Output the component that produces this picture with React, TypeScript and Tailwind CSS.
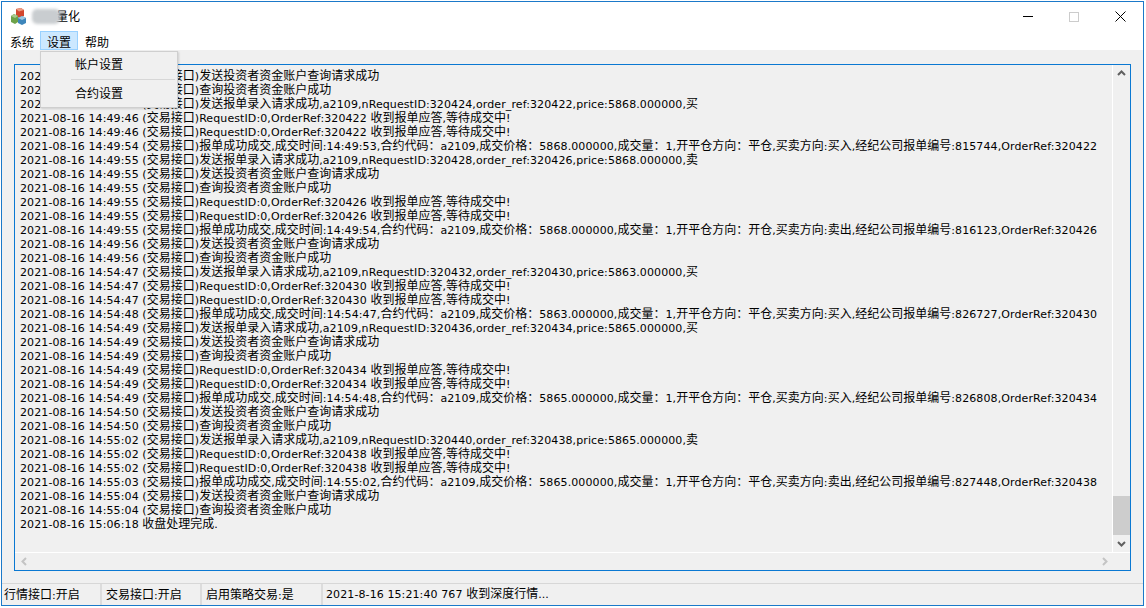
const account = '发送投资者资金账户查询请求成功';
const query = '查询投资者资金账户成功';

function order(id: number, ref: number, price: number, side: string) {
  return `发送报单录入请求成功,a2109,nRequestID:${id},order_ref:${ref},price:${price}.000000,${side}`;
}

function ack(ref: number) {
  return `RequestID:0,OrderRef:${ref} 收到报单应答,等待成交中!`;
}

function trade(time: string, price: number, open: string, side: string, no: number, ref: number) {
  return `报单成功成交,成交时间:${time},合约代码：a2109,成交价格：${price}.000000,成交量：1,开平仓方向：${open},买卖方向:${side},经纪公司报单编号:${no},OrderRef:${ref}`;
}

const logs: [string, string][] = [
  ['14:49:46', account],
  ['14:49:46', query],
  ['14:49:46', order(320424, 320422, 5868, '买')],
  ['14:49:46', ack(320422)],
  ['14:49:46', ack(320422)],
  ['14:49:54', trade('14:49:53', 5868, '平仓', '买入', 815744, 320422)],
  ['14:49:55', order(320428, 320426, 5868, '卖')],
  ['14:49:55', account],
  ['14:49:55', query],
  ['14:49:55', ack(320426)],
  ['14:49:55', ack(320426)],
  ['14:49:55', trade('14:49:54', 5868, '开仓', '卖出', 816123, 320426)],
  ['14:49:56', account],
  ['14:49:56', query],
  ['14:54:47', order(320432, 320430, 5863, '买')],
  ['14:54:47', ack(320430)],
  ['14:54:47', ack(320430)],
  ['14:54:48', trade('14:54:47', 5863, '平仓', '买入', 826727, 320430)],
  ['14:54:49', order(320436, 320434, 5865, '买')],
  ['14:54:49', account],
  ['14:54:49', query],
  ['14:54:49', ack(320434)],
  ['14:54:49', ack(320434)],
  ['14:54:49', trade('14:54:48', 5865, '平仓', '买入', 826808, 320434)],
  ['14:54:50', account],
  ['14:54:50', query],
  ['14:55:02', order(320440, 320438, 5865, '卖')],
  ['14:55:02', ack(320438)],
  ['14:55:02', ack(320438)],
  ['14:55:03', trade('14:55:02', 5865, '平仓', '卖出', 827448, 320438)],
  ['14:55:04', account],
  ['14:55:04', query],
];

// latin runs stay at 11px, CJK runs are 12px wide like the original font
function Mixed({ text }: { text: string }) {
  const parts = text.split(/([\u3000-\u9fff\uff00-\uffef]+)/);
  return (
    <>
      {parts.map((part, i) =>
        i % 2 === 1 ? (
          <span key={i} className="text-[12px]">
            {part}
          </span>
        ) : (
          <span key={i} className="tracking-[0.1px]">
            {part}
          </span>
        ),
      )}
    </>
  );
}

function AppIcon() {
  return (
    <svg width="17" height="17" viewBox="0 0 17 17">
      <path d="M6 1l5-1 3 2v6l-5 2-3-2z" fill="#d2472f" />
      <path d="M6 1l5-1 3 2-5 1.5z" fill="#ec9c83" />
      <path d="M1 8l3-2 4 2v6l-3 2-4-2z" fill="#6da24a" />
      <path d="M1 8l3-2 4 2-3 2z" fill="#a9c98f" />
      <path d="M8 10l4-2 4 2v5l-4 2-4-2z" fill="#3d86bb" />
      <path d="M8 10l4-2 4 2-4 2z" fill="#9cc8e2" />
    </svg>
  );
}

function WindowButtons() {
  return (
    <div className="flex items-center">
      <div className="w-[46px] h-[29px] flex items-center justify-center">
        <div className="w-[10px] h-px bg-black" />
      </div>
      <div className="w-[46px] h-[29px] flex items-center justify-center">
        <div className="w-[10px] h-[10px] border border-[#cccccc]" />
      </div>
      <div className="w-[46px] h-[29px] flex items-center justify-center">
        <svg width="11" height="11" viewBox="0 0 11 11" stroke="#000" fill="none">
          <path d="M0.5 0.5l10 10M10.5 0.5l-10 10" />
        </svg>
      </div>
    </div>
  );
}

function Chevron({ d, color }: { d: string; color: string }) {
  return (
    <svg width="9" height="9" viewBox="0 0 9 9" fill="none" stroke={color} strokeWidth="2">
      <path d={d} />
    </svg>
  );
}

export default function App() {
  return (
    <div className="w-[1146px] h-[608px] bg-white overflow-hidden pl-px pt-px text-black font-['DejaVu_Sans','Noto_Sans_CJK_SC',sans-serif] text-[11px]">
      <div className="relative w-[1143px] h-[605px] border border-[#1b79c9] bg-[#f0f0f0] flex flex-col">
        <div className="h-[29px] bg-white flex items-center justify-between pl-[8px]">
          <div className="flex items-center">
            <AppIcon />
            <div className="ml-[5px] w-[28px] h-[15px] rounded-[5px] bg-[#c9cdd0] blur-[1.5px]" />
            <div className="-ml-[4px] text-[12px]">量化</div>
          </div>
          <WindowButtons />
        </div>

        <div className="h-[19px] bg-white flex items-center pl-[2px] text-[12px]">
          <div className="px-[6px] h-[19px] leading-[24px]">系统</div>
          <div className="px-[6px] h-[19px] leading-[22px] bg-[#cce8ff] border border-[#99d1ff]">设置</div>
          <div className="px-[7px] h-[19px] leading-[24px]">帮助</div>
        </div>

        <div className="flex-1 px-[12px] pt-[14px] pb-[12px] min-h-0">
          <div className="h-full border border-[#0a78d2] flex flex-col">
            <div className="flex-1 min-h-0 flex border-b border-white">
              <div className="flex-1 min-w-0 overflow-hidden pl-[5px] pt-[4px] leading-[14px]">
                {logs.map(([time, text], i) => (
                  <div key={i} className="whitespace-nowrap h-[14px]">
                    <Mixed text={`2021-08-16 ${time} (交易接口)${text}`} />
                  </div>
                ))}
                <div className="whitespace-nowrap h-[14px]">
                  <Mixed text="2021-08-16 15:06:18 收盘处理完成." />
                </div>
              </div>
              <div className="w-[18px] border-l border-white flex flex-col items-center justify-between">
                <div className="h-[17px] flex items-center">
                  <Chevron d="M1 6l3.5-3.5L8 6" color="#606060" />
                </div>
                <div className="w-full flex flex-col items-center">
                  <div className="w-full h-[39px] bg-[#cdcdcd]" />
                  <div className="h-[17px] flex items-center">
                    <Chevron d="M1 3l3.5 3.5L8 3" color="#606060" />
                  </div>
                </div>
              </div>
            </div>
            <div className="h-[17px] flex items-center justify-between pl-[5px] pr-[21px]">
              <Chevron d="M6 1L2.5 4.5 6 8" color="#c4c4c4" />
              <Chevron d="M3 1l3.5 3.5L3 8" color="#c4c4c4" />
            </div>
          </div>
        </div>

        <div className="h-[22px] border-t border-[#d7d7d7] flex items-center">
          <div className="w-[100px] pl-[2px] border-r-2 border-[#dcdcdc] h-full leading-[22px]">
            <Mixed text="行情接口:开启" />
          </div>
          <div className="w-[100px] pl-[4px] border-r-2 border-[#dcdcdc] h-full leading-[22px]">
            <Mixed text="交易接口:开启" />
          </div>
          <div className="w-[121px] pl-[4px] border-r-2 border-[#dcdcdc] h-full leading-[22px]">
            <Mixed text="启用策略交易:是" />
          </div>
          <div className="pl-[3px] leading-[22px]">
            <Mixed text="2021-8-16 15:21:40 767 收到深度行情..." />
          </div>
        </div>

        {/* 设置 dropdown over the log box */}
        <div className="absolute left-[38px] top-[49px] w-[138px] h-[57px] bg-[#f0f0f0] border border-[#cfcfcf] shadow-[1px_1px_2px_rgba(0,0,0,0.15)] text-[12px] flex flex-col">
          <div className="h-[27px] pl-[34px] leading-[27px]">帐户设置</div>
          <div className="ml-[30px] mr-[2px] h-px bg-[#d7d7d7]" />
          <div className="h-[27px] pl-[34px] leading-[29px]">合约设置</div>
        </div>
      </div>
    </div>
  );
}
